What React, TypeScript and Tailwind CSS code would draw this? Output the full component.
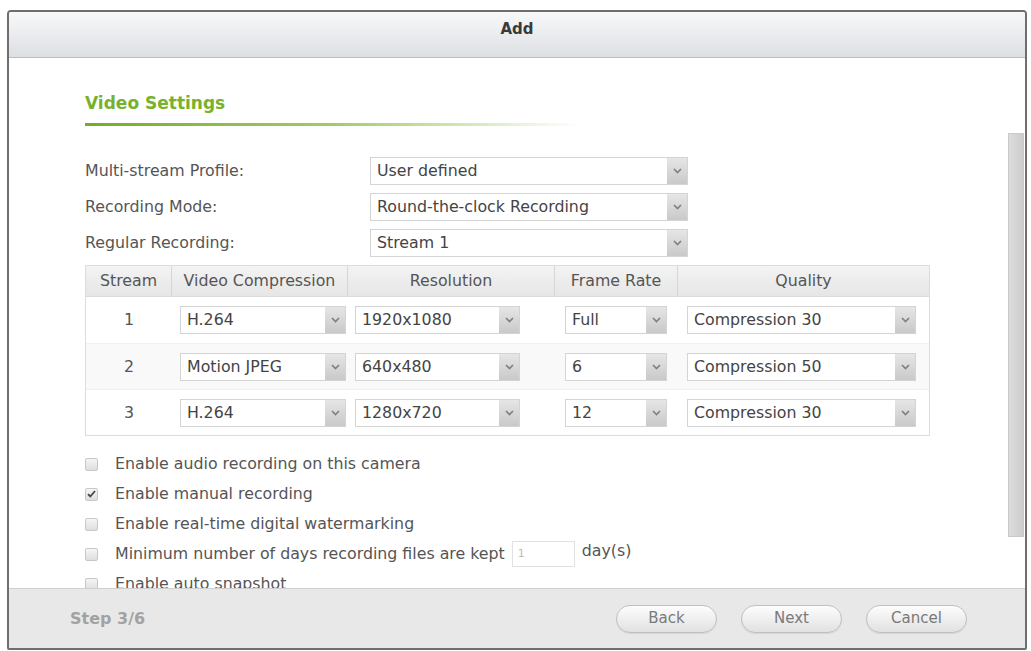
import React from 'react'

type StreamRow = {
  n: string
  codec: string
  res: string
  fps: string
  quality: string
}

type CheckItem = {
  label: string
  checked: boolean
  days?: boolean
}

const streams: StreamRow[] = [
  { n: '1', codec: 'H.264', res: '1920x1080', fps: 'Full', quality: 'Compression 30' },
  { n: '2', codec: 'Motion JPEG', res: '640x480', fps: '6', quality: 'Compression 50' },
  { n: '3', codec: 'H.264', res: '1280x720', fps: '12', quality: 'Compression 30' },
]

const checks: CheckItem[] = [
  { label: 'Enable audio recording on this camera', checked: false },
  { label: 'Enable manual recording', checked: true },
  { label: 'Enable real-time digital watermarking', checked: false },
  { label: 'Minimum number of days recording files are kept', checked: false, days: true },
  { label: 'Enable auto snapshot', checked: false },
]

function Chevron() {
  return (
    <svg width="9" height="6" viewBox="0 0 9 6" fill="none">
      <path d="M1 1l3.5 3.5L8 1" stroke="#808080" strokeWidth="1.7" />
    </svg>
  )
}

function Select({ value, className }: { value: string; className: string }) {
  return (
    <div className={`flex h-[28px] shrink-0 border border-[#d4d4d4] bg-white ${className}`}>
      <div className="flex min-w-0 flex-1 items-center truncate pl-[6px] text-[#444]">{value}</div>
      <div className="flex w-[20px] shrink-0 items-center justify-center bg-linear-to-b from-[#e6e6e6] to-[#c9c9c9]">
        <Chevron />
      </div>
    </div>
  )
}

function Checkbox({ checked }: { checked: boolean }) {
  return (
    <div className="flex h-[13px] w-[13px] shrink-0 items-center justify-center rounded-[2px] border border-[#c8c8c8] bg-linear-to-b from-[#f5f5f5] to-[#dedede]">
      {checked && (
        <svg width="9" height="8" viewBox="0 0 9 8" fill="none">
          <path d="M1 4.2l2.3 2.3L8 1" stroke="#444" strokeWidth="1.8" />
        </svg>
      )}
    </div>
  )
}

function Button({ label }: { label: string }) {
  return (
    <button className="h-[28px] w-[101px] rounded-full border border-[#c0c0c0] bg-linear-to-b from-[#fdfdfd] to-[#e1e1e1] text-[15px] text-[#7a7a7a] shadow-[0_1px_1px_rgba(0,0,0,0.08)]">
      {label}
    </button>
  )
}

export default function App() {
  return (
    <div className="h-[651px] w-[1031px] overflow-hidden bg-white pt-[10px] font-['DejaVu_Sans',Verdana,sans-serif] text-[15.8px]">
      <div className="ml-[7px] flex h-[640px] w-[1020px] flex-col overflow-hidden rounded-t-[4px] rounded-b-[2px] border-2 border-[#6e6e6e] bg-white">
        {/* title bar */}
        <div className="flex h-[46px] shrink-0 items-center justify-center border-b border-[#b9bdc1] bg-linear-to-b from-[#f7f8f9] to-[#dde0e3] pb-[10px]">
          <span className="text-[15px] font-bold text-[#3a3a3a]">Add</span>
        </div>

        {/* body, scrolled so the last option is cut by the footer */}
        <div className="flex h-[530px] shrink-0 overflow-hidden">
          <div className="flex min-w-0 flex-1 flex-col overflow-hidden pl-[76px] pt-[34px]">
            <div className="h-[22px] shrink-0 text-[17px] font-bold leading-[22px] text-[#78b22c]">Video Settings</div>
            <div className="mt-[9px] h-[3px] w-[495px] shrink-0 bg-linear-to-r from-[#72ad27] via-[#9fcd62] to-transparent" />

            <div className="mt-[31px] flex shrink-0 flex-col gap-[8px] text-[#555]">
              <div className="flex h-[28px] items-center">
                <span className="w-[285px]">Multi-stream Profile:</span>
                <Select value="User defined" className="w-[318px]" />
              </div>
              <div className="flex h-[28px] items-center">
                <span className="w-[285px]">Recording Mode:</span>
                <Select value="Round-the-clock Recording" className="w-[318px]" />
              </div>
              <div className="flex h-[28px] items-center">
                <span className="w-[285px]">Regular Recording:</span>
                <Select value="Stream 1" className="w-[318px]" />
              </div>
            </div>

            {/* stream table */}
            <div className="mt-[8px] w-[845px] shrink-0 border border-[#dcdcdc]">
              <div className="grid h-[31px] grid-cols-[86px_176px_207px_123px_251px] border-b border-[#dcdcdc] bg-linear-to-b from-[#f3f3f3] to-[#e6e6e6] text-[#555]">
                <div className="flex items-center justify-center border-r border-[#d6d6d6]">Stream</div>
                <div className="flex items-center justify-center border-r border-[#d6d6d6]">Video Compression</div>
                <div className="flex items-center justify-center border-r border-[#d6d6d6]">Resolution</div>
                <div className="flex items-center justify-center border-r border-[#d6d6d6]">Frame Rate</div>
                <div className="flex items-center justify-center">Quality</div>
              </div>
              {streams.map((s, i) => (
                <div
                  key={s.n}
                  className={`grid h-[46px] grid-cols-[86px_176px_207px_123px_251px] items-center ${
                    i === 1 ? 'bg-[#f9f9f9]' : 'bg-white'
                  } ${i > 0 ? 'border-t border-[#f0f0f0]' : ''}`}
                >
                  <div className="text-center text-[#555]">{s.n}</div>
                  <div>
                    <Select value={s.codec} className="ml-[8px] w-[166px]" />
                  </div>
                  <div>
                    <Select value={s.res} className="ml-[7px] w-[165px]" />
                  </div>
                  <div>
                    <Select value={s.fps} className="ml-[10px] w-[102px]" />
                  </div>
                  <div>
                    <Select value={s.quality} className="ml-[9px] w-[229px]" />
                  </div>
                </div>
              ))}
            </div>

            {/* options */}
            <div className="mt-[13px] flex shrink-0 flex-col text-[#555]">
              {checks.map((c) => (
                <div key={c.label} className="flex h-[30px] shrink-0 items-center">
                  <Checkbox checked={c.checked} />
                  <span className="ml-[17px] whitespace-nowrap">{c.label}</span>
                  {c.days && (
                    <>
                      <div className="ml-[7px] flex h-[26px] w-[63px] items-center border border-[#e2e2e2] pl-[5px] text-[11px] text-[#bbb]">
                        1
                      </div>
                      <span className="mb-[6px] ml-[7px]">day(s)</span>
                    </>
                  )}
                </div>
              ))}
            </div>
          </div>

          {/* scrollbar */}
          <div className="w-[18px] shrink-0 pl-[1px] pr-[1px] pt-[75px]">
            <div className="h-[404px] w-full border border-[#c9c9c9] bg-linear-to-r from-[#dcdcdc] to-[#cdcdcd]" />
          </div>
        </div>

        {/* footer */}
        <div className="flex h-[60px] shrink-0 items-center border-t border-[#cfcfcf] bg-[#e8e8e8] pl-[61px] pr-[58px]">
          <span className="text-[16px] font-bold text-[#a2a2a2]">Step 3/6</span>
          <div className="ml-auto flex gap-[24px]">
            <Button label="Back" />
            <Button label="Next" />
            <Button label="Cancel" />
          </div>
        </div>
      </div>
    </div>
  )
}
